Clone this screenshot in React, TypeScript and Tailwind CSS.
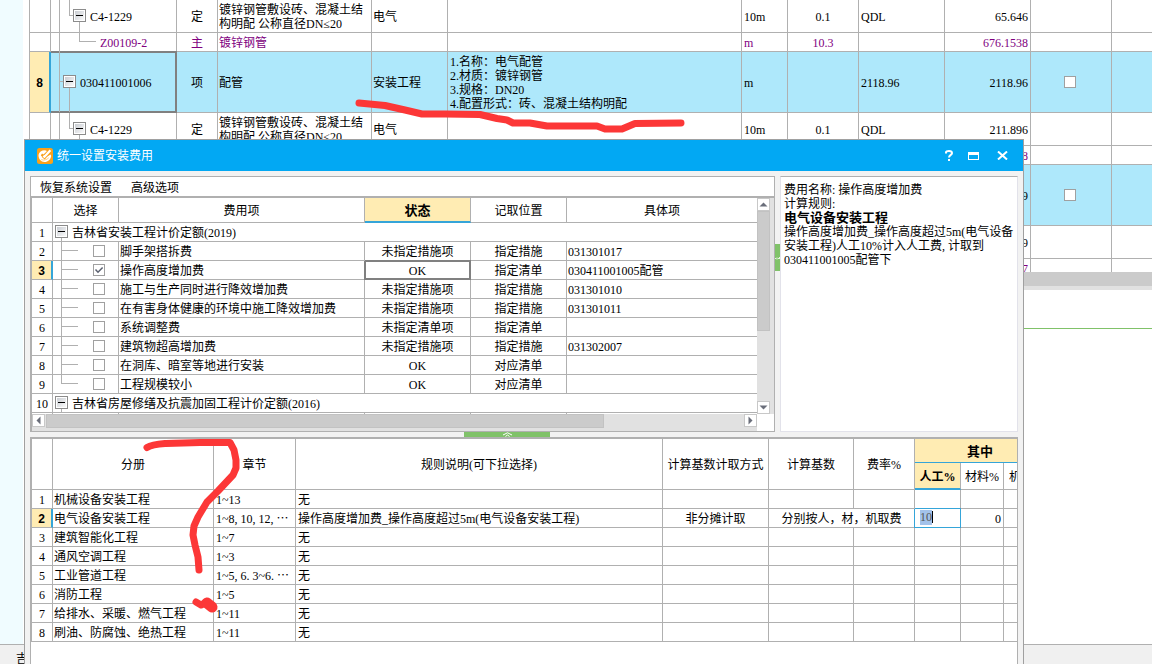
import { useEffect, useRef, useState } from 'react';
import clsx from 'clsx';

const cell = 'border-r border-b border-[#b0b0b0] p-0';
const textCell = 'border-r border-b border-[#b0b0b0] p-0 pt-[2px]';
const digits = "font-['Liberation_Sans',sans-serif] font-bold";

interface BillRow {
  no?: string;
  kind: 'item' | 'quota' | 'material';
  code: string;
  type: string;
  name: string;
  major?: string;
  features?: string[];
  unit: string;
  content?: string;
  expr?: string;
  amount: string;
  active?: boolean;
}

const billRows: BillRow[] = [
  { kind: 'quota', code: 'C4-1229', type: '定', name: '镀锌钢管敷设砖、混凝土结构明配 公称直径DN≤20', major: '电气', unit: '10m', content: '0.1', expr: 'QDL', amount: '65.646' },
  { kind: 'material', code: 'Z00109-2', type: '主', name: '镀锌钢管', unit: 'm', content: '10.3', amount: '676.1538' },
  {
    no: '8',
    kind: 'item',
    code: '030411001006',
    type: '项',
    name: '配管',
    major: '安装工程',
    features: ['1.名称：电气配管', '2.材质：镀锌钢管', '3.规格：DN20', '4.配置形式：砖、混凝土结构明配'],
    unit: 'm',
    expr: '2118.96',
    amount: '2118.96',
    active: true,
  },
  { kind: 'quota', code: 'C4-1229', type: '定', name: '镀锌钢管敷设砖、混凝土结构明配 公称直径DN≤20', major: '电气', unit: '10m', content: '0.1', expr: 'QDL', amount: '211.896' },
  { kind: 'material', code: '', type: '', name: '', unit: '', amount: '2182.5288' },
  { kind: 'item', code: '', type: '', name: '', unit: '', amount: '76.69' },
  { kind: 'quota', code: '', type: '', name: '', unit: '', amount: '7.669' },
  { kind: 'material', code: '', type: '', name: '', unit: '', amount: '78.9907' },
];

interface FeeRow {
  group?: string;
  name?: string;
  checked?: boolean;
  status?: string;
  place?: string;
  target?: string;
}

const feeRows: FeeRow[] = [
  { group: '吉林省安装工程计价定额(2019)' },
  { name: '脚手架搭拆费', status: '未指定措施项', place: '指定措施', target: '031301017' },
  { name: '操作高度增加费', checked: true, status: 'OK', place: '指定清单', target: '030411001005配管' },
  { name: '施工与生产同时进行降效增加费', status: '未指定措施项', place: '指定措施', target: '031301010' },
  { name: '在有害身体健康的环境中施工降效增加费', status: '未指定措施项', place: '指定措施', target: '031301011' },
  { name: '系统调整费', status: '未指定清单项', place: '指定清单' },
  { name: '建筑物超高增加费', status: '未指定措施项', place: '指定措施', target: '031302007' },
  { name: '在洞库、暗室等地进行安装', status: 'OK', place: '对应清单' },
  { name: '工程规模较小', status: 'OK', place: '对应清单' },
  { group: '吉林省房屋修缮及抗震加固工程计价定额(2016)' },
];

const volumes = [
  { name: '机械设备安装工程', chapter: '1~13', rule: '无' },
  { name: '电气设备安装工程', chapter: '1~8, 10, 12, ', more: true, rule: '操作高度增加费_操作高度超过5m(电气设备安装工程)', mode: '非分摊计取', base: '分别按人，材，机取费' },
  { name: '建筑智能化工程', chapter: '1~7', rule: '无' },
  { name: '通风空调工程', chapter: '1~3', rule: '无' },
  { name: '工业管道工程', chapter: '1~5, 6. 3~6. ', more: true, rule: '无' },
  { name: '消防工程', chapter: '1~5', rule: '无' },
  { name: '给排水、采暖、燃气工程', chapter: '1~11', rule: '无' },
  { name: '刷油、防腐蚀、绝热工程', chapter: '1~11', rule: '无' },
];

function Expander() {
  return (
    <button
      aria-label="折叠"
      className="relative block size-[13px] shrink-0 border border-[#8c8c8c] bg-gradient-to-br from-[#c4c8ce] to-white shadow-[inset_0_0_0_1px_#fff]"
    >
      <span className="absolute top-[5px] left-[2px] h-px w-[7px] bg-black" />
    </button>
  );
}

function Branch({ d, width, height }: { d: string; width: number; height: number }) {
  return (
    <svg width={width} height={height} className="block shrink-0" fill="none" stroke="#b0b0b0" shapeRendering="crispEdges">
      <path d={d} />
    </svg>
  );
}

function Check({ label, defaultChecked }: { label: string; defaultChecked?: boolean }) {
  const [on, setOn] = useState(!!defaultChecked);
  return (
    <label className="relative block size-3 shrink-0">
      <input
        type="checkbox"
        aria-label={label}
        checked={on}
        onChange={() => setOn(!on)}
        className="block size-3 appearance-none border border-[#a0a0a0] bg-white"
      />
      {on && (
        <svg viewBox="0 0 12 12" className="pointer-events-none absolute inset-0 size-3" fill="none" stroke="#5b6170" strokeWidth="1.5">
          <path d="M2.5 5.5 5 8.2 9.6 3.4" />
        </svg>
      )}
    </label>
  );
}

function CodeCell({ row }: { row: BillRow }) {
  if (row.kind === 'item') {
    return (
      <div className="relative flex h-[60px] items-center pl-3">
        <span className="absolute top-0 left-2 block">
          <Branch width={20} height={60} d="M.5 0V60M0 29.5H4M10.5 36V60" />
        </span>
        <span className="relative mr-1 pb-[2px]">
          <Expander />
        </span>
        <span className="pt-[2px]">{row.code}</span>
      </div>
    );
  }
  if (row.kind === 'quota') {
    return (
      <div className="relative flex h-8 items-center pl-[22px]">
        <span className="absolute top-0 left-2 block">
          <Branch width={30} height={33} d="M.5 0V33M10.5 0V15.5H15M20.5 22V33" />
        </span>
        <span className="relative mr-1 pb-[2px]">
          <Expander />
        </span>
        <span className="pt-[2px]">{row.code}</span>
      </div>
    );
  }
  return (
    <div className="flex h-[18px] items-center pl-2">
      <Branch width={41} height={19} d="M.5 0V19M20.5 0V8.5H37" />
      <span className="pt-[2px]">{row.code}</span>
    </div>
  );
}

function BillTable() {
  return (
    <table className="w-full table-fixed border-separate border-spacing-0 border-l border-[#b0b0b0]">
      <colgroup>
        <col className="w-[21px]" />
        <col className="w-[126px]" />
        <col className="w-[41px]" />
        <col className="w-[154px]" />
        <col className="w-[76px]" />
        <col />
        <col className="w-[46px]" />
        <col className="w-[71px]" />
        <col className="w-[86px]" />
        <col className="w-[86px]" />
        <col className="w-[81px]" />
        <col className="w-10" />
      </colgroup>
      <tbody>
        {billRows.map((r, i) => (
          <tr key={i} className={clsx(r.kind === 'item' && 'bg-[#aee8fb]', r.kind === 'material' && 'text-[#800080]')}>
            <td
              className={clsx(
                'border-b border-b-[#b0b0b0] p-0 pt-[2px] text-center',
                digits,
                r.active ? 'border-r-2 border-r-[#35a5d9] bg-[#ffecb3]' : 'border-r border-r-[#b0b0b0]'
              )}
            >
              {r.no}
            </td>
            <td
              className={clsx(
                'border-r border-b p-0',
                r.active ? 'border-[#808080] shadow-[0_-1px_0_#808080,inset_0_1px_0_#808080,inset_-1px_-1px_0_#808080]' : 'border-[#b0b0b0]'
              )}
            >
              <CodeCell row={r} />
            </td>
            <td className={clsx(textCell, 'text-center')}>{r.type}</td>
            <td className={clsx(textCell, 'pl-[1px]')}>{r.name}</td>
            <td className={clsx(textCell, 'pl-[1px]')}>{r.major}</td>
            <td className={clsx(textCell, 'pl-[2px]')}>
              {r.features?.map((f) => (
                <div key={f}>{f}</div>
              ))}
            </td>
            <td className={clsx(textCell, 'pl-[2px]')}>{r.unit}</td>
            <td className={clsx(textCell, 'text-center')}>{r.content}</td>
            <td className={clsx(textCell, 'pl-[2px]')}>{r.expr}</td>
            <td className={clsx(textCell, 'pr-[2px] text-right')}>{r.amount}</td>
            <td className={cell}>
              <div className="flex justify-center pr-[2px]">{r.kind === 'item' && <Check label="锁定综合单价" />}</div>
            </td>
            <td className="border-b border-[#b0b0b0] p-0" />
          </tr>
        ))}
      </tbody>
    </table>
  );
}

function ScrollButton({ label, d }: { label: string; d: string }) {
  return (
    <button aria-label={label} className="block size-[13px] shrink-0 border border-[#c8c8c8] bg-white">
      <svg viewBox="0 0 11 11" className="block size-[11px]" fill="#6a6e7a">
        <path d={d} />
      </svg>
    </button>
  );
}

function FeeTable() {
  return (
    <table className="w-full table-fixed border-separate border-spacing-0">
      <colgroup>
        <col className="w-[21px]" />
        <col className="w-[66px]" />
        <col className="w-[246px]" />
        <col className="w-[106px]" />
        <col className="w-24" />
        <col />
      </colgroup>
      <thead>
        <tr className="h-[25px]">
          <th className={cell} />
          <th className={clsx(textCell, 'font-normal')}>选择</th>
          <th className={clsx(textCell, 'font-normal')}>费用项</th>
          <th className="border-r border-b-2 border-r-[#b0b0b0] border-b-[#35a5d9] bg-[#ffecb3] p-0 pt-[2px] text-[13px] font-bold">状态</th>
          <th className={clsx(textCell, 'font-normal')}>记取位置</th>
          <th className="border-b border-[#b0b0b0] p-0 pt-[2px] font-normal">具体项</th>
        </tr>
      </thead>
      <tbody>
        {feeRows.map((r, i) => (
          <tr key={i} className="h-[19px]">
            <td
              className={clsx(
                'border-b border-b-[#b0b0b0] p-0 pt-[2px] text-center',
                r.checked ? 'border-r-2 border-r-[#35a5d9] bg-[#ffecb3]' : 'border-r border-r-[#b0b0b0]',
                r.checked && digits
              )}
            >
              {i + 1}
            </td>
            {r.group ? (
              <td colSpan={5} className="border-b border-[#b0b0b0] p-0">
                <div className="relative flex h-[18px] items-center gap-1 pl-[2px]">
                  <span className="absolute bottom-0 left-2 h-1 w-px bg-[#b0b0b0]" />
                  <span className="relative pb-[2px]">
                    <Expander />
                  </span>
                  <span className="pt-[2px]">{r.group}</span>
                </div>
              </td>
            ) : (
              <>
                <td className={cell}>
                  <div className="flex h-[18px] items-center pl-2">
                    <Branch width={32} height={18} d={i === 8 ? 'M.5 0V8.5H17' : 'M.5 0V18M0 8.5H17'} />
                    <Check label={r.name!} defaultChecked={r.checked} />
                  </div>
                </td>
                <td className={clsx(textCell, 'pl-[1px]')}>{r.name}</td>
                <td
                  className={clsx(
                    'border-r border-b p-0 pt-[2px] text-center',
                    r.checked ? 'border-[#808080] shadow-[0_-1px_0_#808080,-1px_0_0_#808080,inset_0_0_0_1px_#808080]' : 'border-[#b0b0b0]'
                  )}
                >
                  {r.status}
                </td>
                <td className={clsx(textCell, 'text-center')}>{r.place}</td>
                <td className="border-b border-[#b0b0b0] p-0 pt-[2px] pl-[1px]">{r.target}</td>
              </>
            )}
          </tr>
        ))}
        <tr className="h-[19px]">
          <td className={cell} />
          <td className={cell} />
          <td className={cell} />
          <td className={cell} />
          <td className={cell} />
          <td className="p-0" />
        </tr>
      </tbody>
    </table>
  );
}

function RateInput() {
  const ref = useRef<HTMLInputElement>(null);

  useEffect(() => {
    ref.current?.focus();
    ref.current?.select();
  }, []);

  return (
    <div className="relative h-[18px]">
      <input
        ref={ref}
        aria-label="人工%"
        defaultValue="10"
        className="block h-[18px] w-full bg-white pb-[2px] pl-[5px] text-[#555] outline-none selection:bg-[#a3c2ea] selection:text-[#555]"
      />
      <span className="absolute top-[2px] left-[17px] h-3 w-px bg-black" />
    </div>
  );
}

function VolumeTable() {
  return (
    <table className="w-full table-fixed border-separate border-spacing-0">
      <colgroup>
        <col className="w-[21px]" />
        <col className="w-[161px]" />
        <col className="w-[82px]" />
        <col />
        <col className="w-[106px]" />
        <col className="w-[85px]" />
        <col className="w-[61px]" />
        <col className="w-[46px]" />
        <col className="w-[43px]" />
        <col className="w-[13px]" />
      </colgroup>
      <thead>
        <tr className="h-6">
          <th rowSpan={2} className={cell} />
          <th rowSpan={2} className={clsx(textCell, 'font-normal')}>分册</th>
          <th rowSpan={2} className={clsx(textCell, 'font-normal')}>章节</th>
          <th rowSpan={2} className={clsx(textCell, 'font-normal')}>规则说明(可下拉选择)</th>
          <th rowSpan={2} className={clsx(textCell, 'font-normal')}>计算基数计取方式</th>
          <th rowSpan={2} className={clsx(textCell, 'font-normal')}>计算基数</th>
          <th rowSpan={2} className={clsx(textCell, 'font-normal')}>费率%</th>
          <th colSpan={3} className="border-b border-[#35a5d9] bg-[#ffecb3] p-0 pt-[2px] pl-7 text-[13px] font-bold">其中</th>
        </tr>
        <tr className="h-[27px]">
          <th className="border-r border-b-2 border-r-[#b0b0b0] border-b-[#35a5d9] bg-[#ffecb3] p-0 pt-[2px] font-bold">人工%</th>
          <th className={clsx(textCell, 'font-normal')}>材料%</th>
          <th className="overflow-hidden border-b border-[#b0b0b0] p-0 pt-[2px] pl-[5px] text-left font-normal whitespace-nowrap">机械%</th>
        </tr>
      </thead>
      <tbody>
        {volumes.map((v, i) => {
          const active = i === 1;
          return (
            <tr key={v.name} className="h-[19px]">
              <td
                className={clsx(
                  'border-b border-b-[#b0b0b0] p-0 pt-[2px] text-center',
                  active ? 'border-r-2 border-r-[#35a5d9] bg-[#ffecb3]' : 'border-r border-r-[#b0b0b0]',
                  active && digits
                )}
              >
                {i + 1}
              </td>
              <td className={clsx(textCell, 'pl-[1px]')}>{v.name}</td>
              <td className={clsx(textCell, 'pl-[2px] whitespace-pre')}>
                {v.chapter}
                {v.more && <span className="font-['Noto_Sans_CJK_SC',sans-serif] leading-none">…</span>}
              </td>
              <td className={clsx(textCell, 'pl-[2px]')}>{v.rule}</td>
              <td className={clsx(textCell, 'text-center')}>{v.mode}</td>
              {active ? (
                <td colSpan={2} className={clsx(textCell, 'text-center')}>{v.base}</td>
              ) : (
                <>
                  <td className={cell} />
                  <td className={cell} />
                </>
              )}
              {active ? (
                <td className="border-r border-b border-[#35a5d9] p-0 shadow-[0_-1px_0_#35a5d9,-1px_0_0_#35a5d9]">
                  <RateInput />
                </td>
              ) : (
                <td className={cell} />
              )}
              <td className={clsx(textCell, 'pr-[2px] text-right')}>{active && '0'}</td>
              <td className="border-b border-[#b0b0b0] p-0" />
            </tr>
          );
        })}
      </tbody>
    </table>
  );
}

function TitleBar() {
  return (
    <header className="flex h-[31px] shrink-0 items-center bg-[#02a8f3] pr-[15px] pl-3 text-white">
      <svg viewBox="0 0 16 16" className="mr-1 size-4">
        <rect width="16" height="16" rx="2.5" fill="#f9a11b" />
        <path d="M1.500 7C2 4 4.500 2.200 8 2.200L10 3 6.500 6.600 5 5.600 3.800 7.400 7 10.600 13.600 6.600 14.200 8C13.600 11.500 11 14 7.500 14 4 14 1.500 11 1.500 7z" fill="#fff" />
        <path d="M6 7.600 7.600 9 14.200 1.400" fill="none" stroke="#f9a11b" strokeWidth="3.400" />
        <path d="M6.300 7.800 7.500 8.800 13.400 2.200" fill="none" stroke="#fff" strokeWidth="2.200" />
        <path d="M4.200 11.600C7 12.600 9.500 12 11.800 9.800" fill="none" stroke="#fbc56c" strokeWidth=".8" />
      </svg>
      <h1 className="flex-1">统一设置安装费用</h1>
      <button aria-label="帮助" className="mr-[13px] flex h-4 w-3 items-center justify-center">
        <svg viewBox="0 0 8 11" className="h-[11px] w-2" fill="none" stroke="#fff" strokeWidth="2">
          <path d="M1 3.500V2.600C1 1.600 2 1 4 1s3 .8 3 2.200C7 4.800 4 5 4 7.500M4 9v2" />
        </svg>
      </button>
      <button aria-label="最大化" className="mr-[17px] block h-2 w-[11px] border border-t-[3px] border-white" />
      <button aria-label="关闭" className="flex h-4 w-3 items-center justify-center">
        <svg viewBox="0 0 11 9" className="h-[9px] w-[11px]" fill="none" stroke="#fff" strokeWidth="2">
          <path d="M1 .5 10 8.500M10 .5 1 8.500" />
        </svg>
      </button>
    </header>
  );
}

function FeeDialog() {
  return (
    <section
      role="dialog"
      aria-label="统一设置安装费用"
      className="absolute top-[139px] right-32 bottom-0 left-6 flex flex-col border border-b-0 border-[#a0a0a0] bg-[#f2f2f2]"
    >
      <TitleBar />
      <div className="flex min-h-0 flex-1 flex-col px-[5px] pt-[5px]">
        <div className="flex h-64 shrink-0">
          <div className="flex min-w-0 flex-1 flex-col border border-[#b0b0b0] bg-white">
            <nav className="flex h-5 shrink-0 items-center gap-[19px] border-b border-[#b0b0b0] pt-[2px] pl-[9px]">
              <button>恢复系统设置</button>
              <button>高级选项</button>
            </nav>
            <div className="flex min-h-0 flex-1 flex-col border-t border-l border-[#b0b0b0]">
              <div className="flex min-h-0 flex-1">
                <div className="min-w-0 flex-1 overflow-hidden">
                  <FeeTable />
                </div>
                <div className="flex w-[17px] shrink-0 flex-col bg-[#e1e1e1]">
                  <ScrollButton label="向上" d="M1.500 7.500 5.500 3.500 9.500 7.500z" />
                  <div className="h-[120px] w-[13px] border border-[#c2c2c2] bg-[#cbcbcb]" />
                  <div className="flex-1" />
                  <ScrollButton label="向下" d="M1.500 3.500 5.500 7.500 9.500 3.500z" />
                </div>
              </div>
              <div className="flex h-[17px] shrink-0">
                <div className="flex min-w-0 flex-1 items-start bg-[#e1e1e1]">
                  <ScrollButton label="向左" d="M7.500 1.500 3.500 5.500 7.500 9.500z" />
                  <div className="ml-[1px] flex-1">
                    <div className="h-[14px] w-4/5 border border-[#c2c2c2] bg-[#cbcbcb]" />
                  </div>
                  <ScrollButton label="向右" d="M3.500 1.500 7.500 5.500 3.500 9.500z" />
                </div>
                <div className="w-[17px] bg-white" />
              </div>
            </div>
          </div>
          <div className="w-[5px] pt-[68px]">
            <div className="flex h-[27px] items-center justify-center bg-[#80c269]">
              <svg viewBox="0 0 5 4" className="h-1 w-[5px]" fill="none" stroke="#e8f6e2">
                <path d="M0 2.500H1M2 1.500V3.500M3 2.500H4M4.500 1V3" />
              </svg>
            </div>
          </div>
          <div className="w-[238px] shrink-0 border border-[#e2e2ea] border-t-[#b0b0b0] bg-white pt-[6px] pl-[3px]">
            <p>费用名称: 操作高度增加费</p>
            <p>计算规则:</p>
            <p className="text-[13px] font-bold">电气设备安装工程</p>
            <p>操作高度增加费_操作高度超过5m(电气设备安装工程)人工10%计入人工费, 计取到030411001005配管下</p>
          </div>
        </div>
        <div className="flex h-[5px] shrink-0 pl-[434px]">
          <button aria-label="折叠面板" className="flex w-[86px] items-center justify-center bg-[#80c269]">
            <svg viewBox="0 0 9 5" className="h-[5px] w-[9px]" fill="none" stroke="#fff">
              <path d="M0 3 4.500 .8 9 3M2.500 4.500 4.500 3 6.500 4.500" />
            </svg>
          </button>
        </div>
        <div className="min-h-0 flex-1 border-x border-t border-[#b0b0b0] bg-white">
          <div className="border-t border-l border-[#b0b0b0]">
            <VolumeTable />
          </div>
        </div>
      </div>
    </section>
  );
}

function PenMarks() {
  return (
    <svg className="pointer-events-none absolute inset-0 size-full" fill="none" stroke="#fc3737" strokeWidth="7" strokeLinecap="round" strokeLinejoin="round">
      <path d="M359 103 385 105.500 405 110 422 114H445L480 114.500 497 118.500 507 120 513 123H530L547 126H597L605 129H622L635 123.500 681 123" />
      <path d="M147 447.500C152 444.500 160 444 166 443.500L200 442.500H230L234 450 236 460V468L233 475 218 491 207 502 198 517 194 526 193 535 195 545 198 557 199 570" />
      <path d="M196 602 201 605 207 602" />
      <path d="M207 603 212 607" strokeWidth="11" />
    </svg>
  );
}

export default function App() {
  return (
    <div className="relative flex min-h-screen flex-col overflow-hidden bg-white font-['Liberation_Serif','Noto_Sans_CJK_SC',serif] text-xs leading-[14px] text-black">
      <div className="flex flex-1">
        <aside className="w-[23px] shrink-0 bg-[#f0fcff]" />
        <main className="min-w-0 flex-1 pl-[6px]">
          <div className="h-[272px] overflow-hidden">
            <BillTable />
          </div>
          <div className="h-[14px] bg-[#cbcbcb]" />
          <div className="h-1 bg-[#e1e1e1]" />
          <div className="h-[39px] border-b border-[#80c269]" />
        </main>
      </div>
      <footer className="h-5 overflow-hidden border-t border-[#b0b0b0] bg-[#f0f0f0] pt-[7px] pl-4">吉</footer>
      <FeeDialog />
      <PenMarks />
    </div>
  );
}
